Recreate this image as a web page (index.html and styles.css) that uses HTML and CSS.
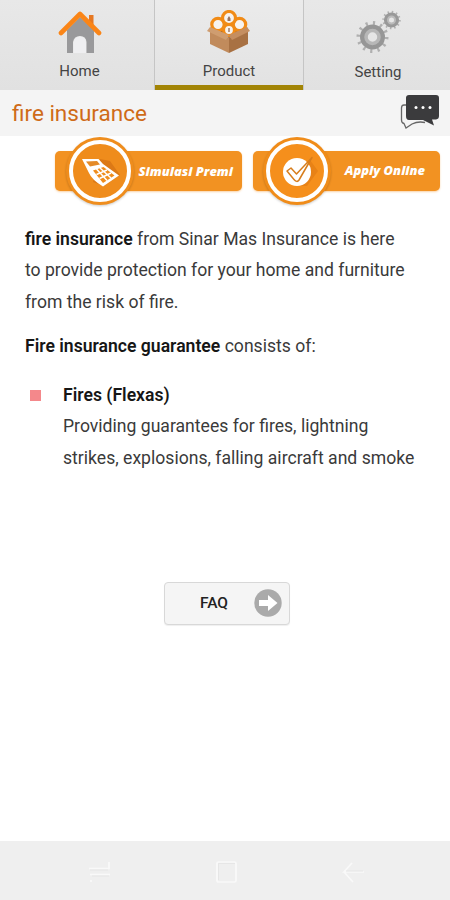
FILE: index.html
```html
<!DOCTYPE html>
<html lang="en">
<head>
<meta charset="utf-8">
<title>Fire insurance</title>
<link rel="stylesheet" href="styles.css">
</head>
<body>
<nav class="tabs">
  <a class="tab home">
    <svg class="tab-icon" viewBox="0 0 44 44" width="44" height="44">
      <path d="M9 20 L22 7 L36 20 V43 H28.500 V32 Q28 26 22 26 Q16 26 15 32 V43 H9Z" fill="#99999b"/>
      <path d="M15.500 43 V33 Q16 26.500 22 26.500 Q28 26.500 28 33 V43Z" fill="#efeff1"/>
      <path d="M31 5 H35.500 V16 L31 13Z" fill="#e67822"/>
      <path d="M3 23 L22 4 L41 23" fill="none" stroke="#fa8517" stroke-width="4.600" stroke-linejoin="round" stroke-linecap="round"/>
    </svg>
    <span>Home</span>
  </a>
  <a class="tab product">
    <svg class="tab-icon" viewBox="0 0 44 44" width="44" height="44">
      <path d="M3 18 L22 12 L41 18 L22 28Z" fill="#8a5a32"/>
      <g fill="#f7f3ef" stroke="#f18b16" stroke-width="3.200">
        <circle cx="11" cy="14.500" r="6.200"/><circle cx="32.500" cy="14.500" r="6.200"/><circle cx="22" cy="8" r="6.500"/><circle cx="22" cy="20" r="5.500"/>
      </g>
      <path d="M20.500 11 V8.500 L22 6 L23.500 8.500 V11Z M21.300 22 V18 H22.700 V22Z" fill="#98735e"/>
      <path d="M3 19 L22 28 V43 L3 34Z" fill="#c18b5c"/>
      <path d="M41 19 L22 28 V43 L41 34Z" fill="#a87143"/>
      <path d="M3 17 L22 25 L19 30 L0 21Z" fill="#cf9d70"/>
      <path d="M40 17 L22 25 L25 30 L43 21Z" fill="#c58e60"/>
    </svg>
    <span>Product</span>
  </a>
  <a class="tab setting">
    <svg class="tab-icon" viewBox="0 0 46 44" width="46" height="44">
      <g fill="none">
        <circle cx="17.500" cy="27" r="14" stroke="#b0b0b0" stroke-width="4" stroke-dasharray="2.200 5.130"/>
        <circle cx="17.500" cy="27" r="9" stroke="#969696" stroke-width="7"/>
        <circle cx="17.500" cy="27" r="6.500" stroke="#b7b7b7" stroke-width="3.500"/>
        <circle cx="36.500" cy="10" r="8" stroke="#b0b0b0" stroke-width="2.500" stroke-dasharray="1.500 2.689"/>
        <circle cx="36.500" cy="10" r="5.300" stroke="#999" stroke-width="4.600"/>
        <circle cx="36.500" cy="10" r="3.500" stroke="#bbb" stroke-width="2"/>
      </g>
    </svg>
    <span>Setting</span>
  </a>
</nav>
<header class="title-bar">
  <h1>fire insurance</h1>
  <svg class="chat" viewBox="0 0 40 36" width="40" height="36">
    <path d="M7 11 H4 Q1.500 11 1.500 14 V26 Q1.500 29 4 29.500 L6 34 L12 30 Q18 27 25 28.500" fill="none" stroke="#666" stroke-width="1.300"/>
    <path d="M9 1 H36 Q39 1 39 4 V22 Q39 25 36 25.500 H32 L34 31.500 L23 26 H9 Q6 26 6 22 V4 Q6 1 9 1Z" fill="#3b3b3d"/>
    <g fill="#fff"><circle cx="16" cy="13.500" r="1.500"/><circle cx="23" cy="13.500" r="1.500"/><circle cx="30" cy="13.500" r="1.500"/></g>
  </svg>
</header>
<main>
  <div class="actions">
    <a class="action simulate">
      <svg class="medal" viewBox="0 0 70 70" width="70" height="70">
        <circle cx="35" cy="35" r="34" fill="#ef8d1d"/>
        <circle cx="35" cy="35" r="29" fill="#ef8c1c" stroke="#fff" stroke-width="4"/>
        <path d="M35 23 L45 25 L55 39 L39 50 L28 46Z" fill="#dc7916"/>
        <path d="M17 23 H33.500 L38 28 L54 39.500 L38 50.500 Q27 44 24 37Z" fill="#fff"/>
        <path d="M21 25.500 L32 25 L35 28.500 L25 30.500Z" fill="#e48a27"/>
        <path d="M28 34.500 L38.500 31 L49.500 39.500 L38 47Z" fill="#ef8d1d"/>
        <path d="M31.500 38.500 L42 34 M34.500 42.500 L46 37 M31.500 33 L42 44.500 M35 32 L46 42" fill="none" stroke="#fff" stroke-width="1.500"/>
      </svg>
      <span>Simulasi Premi</span>
    </a>
    <a class="action apply">
      <svg class="medal" viewBox="0 0 70 70" width="70" height="70">
        <circle cx="35" cy="35" r="34" fill="#f08c19"/>
        <circle cx="35" cy="35" r="29" fill="#f58f1c" stroke="#fff" stroke-width="4"/>
        <path d="M48 24 L56 35 L45 50 L35 50Z" fill="#e88216"/>
        <circle cx="35" cy="36" r="14" fill="#fff"/>
        <path d="M25 35 L29 32 L34.500 38 L50 21.500 L37 44 Q35 47 32 43.500Z" fill="#fff" stroke="#d77d1c" stroke-width="1.500" stroke-linejoin="round"/>
      </svg>
      <span>Apply Online</span>
    </a>
  </div>
  <p class="intro"><span class="line"><b>fire insurance</b> from Sinar Mas Insurance is here</span><span class="line">to provide protection for your home and furniture</span><span class="line">from the risk of fire.</span></p>
  <p class="lead"><span class="line"><b>Fire insurance guarantee</b> consists of:</span></p>
  <ul>
    <li><b class="line item-title">Fires (Flexas)</b><span class="line">Providing guarantees for fires, lightning</span><span class="line">strikes, explosions, falling aircraft and smoke</span></li>
  </ul>
  <button class="faq"><span>FAQ</span>
    <svg viewBox="0 0 28 28" width="28" height="28"><circle cx="14" cy="14" r="13.700" fill="#aaa"/><path d="M5 11 H14 V6 L23.500 14 L14 22 V17 H5Z" fill="#fff"/></svg>
  </button>
</main>
<footer class="system">
  <svg viewBox="0 0 24 24" width="24" height="24"><path d="M1 8.500 H21 V2 M2 14.500 H22 M3 20 V22" fill="none" stroke="#f9f9f9" stroke-width="1.700"/><path d="M2 10 H20 M4 16 H21" stroke="#e3e3e3" stroke-width=".8"/></svg>
  <svg viewBox="0 0 24 24" width="24" height="24"><rect x="2" y="2" width="19" height="20" rx="1.500" fill="none" stroke="#f9f9f9" stroke-width="1.700"/><path d="M3.500 20 V3.500 H20" fill="none" stroke="#e3e3e3" stroke-width=".8"/></svg>
  <svg viewBox="0 0 24 24" width="24" height="24"><path d="M22 12 H2 L10 3 M2 12 L11 22" fill="none" stroke="#f9f9f9" stroke-width="1.700"/><path d="M4 11 H21" stroke="#e3e3e3" stroke-width=".8"/></svg>
</footer>
</body>
</html>
```

FILE: styles.css
```css
* { box-sizing: border-box; }
body {
  margin: 0;
  width: 450px;
  height: 900px;
  display: flex;
  flex-direction: column;
  background: #fff;
  color: #3a3a3a;
  font-family: Roboto, sans-serif;
  overflow: hidden;
}
.tabs {
  height: 90px;
  flex: none;
  display: grid;
  grid-template-columns: 154px 150px 146px;
  background: linear-gradient(#e8e8e8, #e1e1e1);
}
.tab {
  display: flex;
  flex-direction: column;
  align-items: center;
  padding-top: 10px;
  font-size: 15px;
  line-height: 18px;
  color: #444;
}
.tab span { margin-top: 8px; }
.home { padding-left: 5px; }
.product {
  border: solid #c5c5c5;
  border-width: 0 1px;
  background: linear-gradient(#ebebeb, #e2e2e2);
  box-shadow: inset 0 -5px #a28405;
}
.setting { padding-left: 2px; }
.setting span { margin-top: 9px; }
.title-bar {
  height: 46px;
  flex: none;
  display: flex;
  justify-content: space-between;
  padding: 4px 10px 0 12px;
  background: #f4f4f4;
}
h1 {
  margin: 0;
  color: #cf6b18;
  font-size: 22.5px;
  font-weight: 400;
  line-height: 39px;
}
main {
  flex: 1;
  display: flex;
  flex-direction: column;
}
.actions {
  display: flex;
  gap: 11px;
  height: 70px;
  align-items: center;
  padding-left: 55px;
}
.action {
  width: 187px;
  height: 40px;
  display: flex;
  align-items: center;
  justify-content: space-between;
  border-radius: 5px;
  background: #f29222;
  box-shadow: 0 1px 2px #f2922266;
  color: #fff;
  font: italic 800 12.9px "Open Sans", sans-serif;
  white-space: nowrap;
}
.simulate { padding: 0 9px 0 10px; }
.apply { padding: 0 15px 0 9px; }
.action span { padding-bottom: 1px; }
.apply span { padding-bottom: 3px; }
.medal { flex: none; filter: drop-shadow(0 1px 1px #0003); }
p { margin: 0; padding-left: 25px; }
.intro { margin-top: 18px; }
.lead { margin-top: 13px; }
.line {
  display: block;
  width: max-content;
  font-size: 17.6px;
  line-height: 31.3px;
  white-space: nowrap;
}
b { color: #161616; font-weight: 600; }
ul {
  list-style: none;
  margin: 18px 0 0;
  padding: 0 0 0 63px;
}
li { display: grid; grid-template-columns: 1fr; }
li::before {
  content: "";
  grid-row: 1;
  grid-column: 1;
  width: 11px;
  height: 11px;
  margin: 10px 0 0 -33px;
  background: #f4888b;
}
.item-title { grid-row: 1; grid-column: 1; }
.faq {
  width: 126px;
  height: 43px;
  margin: 108px 0 0 164px;
  padding: 0 7px 2px 35px;
  display: flex;
  align-items: center;
  justify-content: space-between;
  border: 1px solid #d8d8d8;
  border-radius: 4px;
  background: #f5f5f5;
  box-shadow: 0 1px 1px #0001;
  color: #222;
  font: 500 15.5px Roboto, sans-serif;
}
.system {
  height: 59px;
  flex: none;
  display: flex;
  justify-content: space-between;
  padding: 19px 84px 0 88px;
  background: #efefef;
}
```
